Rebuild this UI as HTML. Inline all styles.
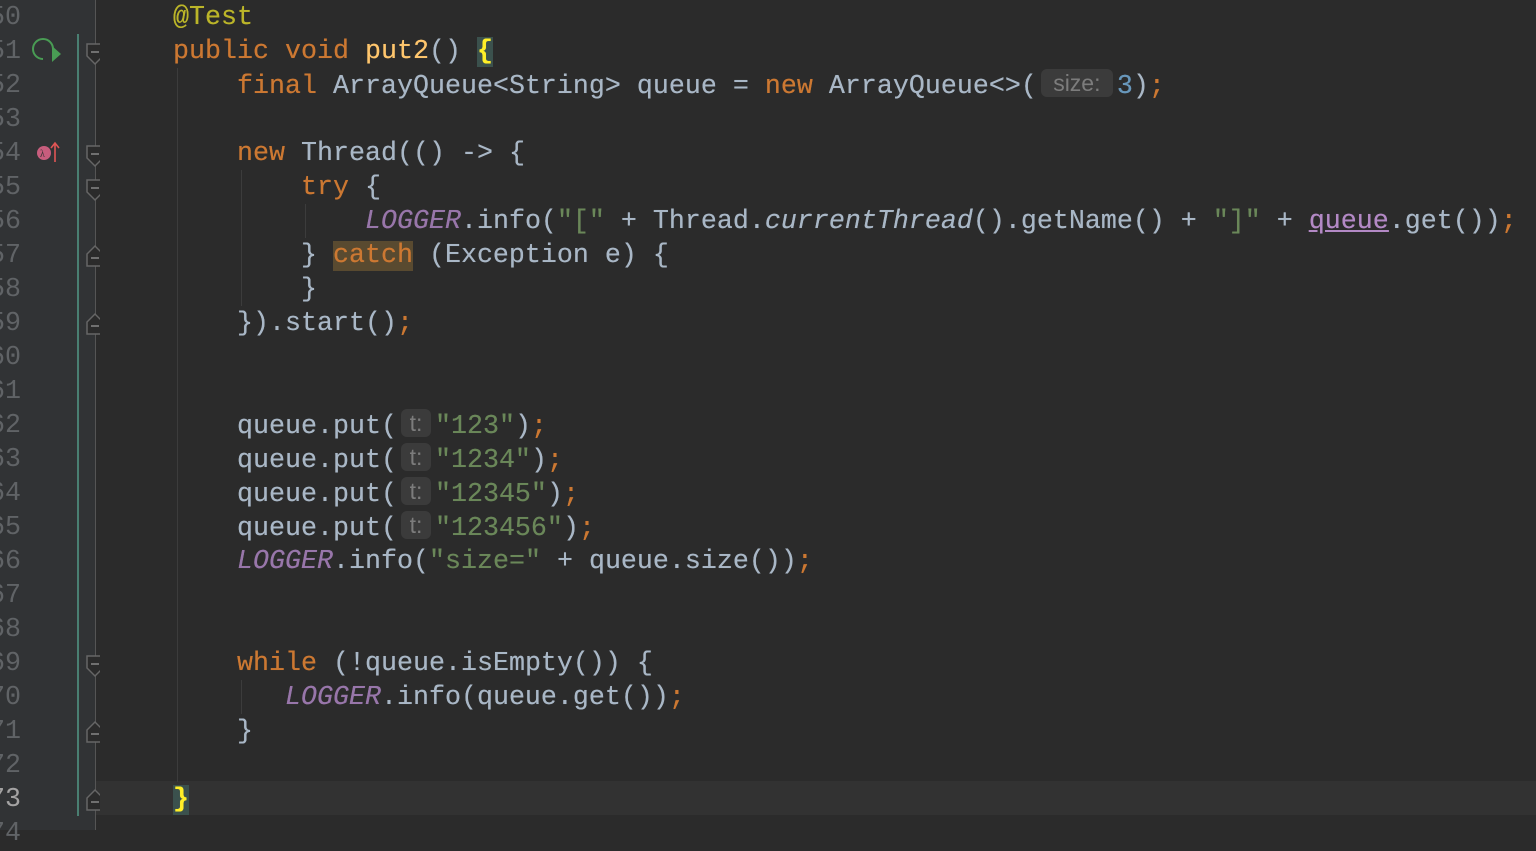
<!DOCTYPE html>
<html><head><meta charset="utf-8"><style>
body{margin:0;width:1536px;height:830px;overflow:hidden;background:#2b2b2b;position:relative;font-family:"Liberation Mono",monospace;}
.gut{position:absolute;left:0;top:0;width:96px;height:830px;background:#313335;}
.ln{position:absolute;right:1515px;width:60px;text-align:right;color:#606366;font-size:26.67px;line-height:34px;height:34px;margin-top:2px}
.l{position:absolute;left:173px;white-space:pre;font-size:26.67px;line-height:34px;height:34px;color:#a9b7c6;margin-top:2px;text-shadow:0 0 0.4px currentColor}
.k{color:#cc7832}.a{color:#bbb529}.s{color:#6a8759}.n{color:#6897bb}.p{color:#9876aa;font-style:italic}.m{color:#ffc66d}.i{font-style:italic}
.h{display:inline-block;font-family:"Liberation Sans",sans-serif;font-size:23px;color:#7c7c7c;background:#3b3b3b;border-radius:6px;line-height:28px;vertical-align:2px;text-align:center;text-shadow:none}
.g{position:absolute;width:1px;background:#3c3c3c}
</style></head><body>
<div class="gut"></div>
<div style="position:absolute;left:96px;top:781px;width:1440px;height:34px;background:#323232"></div>
<div style="position:absolute;left:77px;top:34px;width:2px;height:782px;background:#4a7f72"></div>
<div style="position:absolute;left:95px;top:0;width:1px;height:830px;background:#555"></div>
<div class="g" style="left:177px;top:68px;height:714px"></div>
<div class="g" style="left:241px;top:170px;height:136px"></div>
<div class="g" style="left:305px;top:204px;height:34px"></div>
<div class="g" style="left:241px;top:680px;height:34px"></div>
<svg style="position:absolute;left:0;top:0" width="100" height="830">
<g fill="#2b2b2b" stroke="#666" stroke-width="1.5">
<path d="M87 44h16v12l-8 8l-8-8z"/><path d="M87 146h16v12l-8 8l-8-8z"/><path d="M87 180h16v12l-8 8l-8-8z"/><path d="M87 656h16v12l-8 8l-8-8z"/>
<path d="M87 266h16v-12l-8-8l-8 8z"/><path d="M87 334h16v-12l-8-8l-8 8z"/><path d="M87 742h16v-12l-8-8l-8 8z"/><path d="M87 810h16v-12l-8-8l-8 8z"/>
</g>
<g stroke="#888" stroke-width="1.5"><path d="M91 52h8M91 154h8M91 188h8M91 664h8M91 258h8M91 326h8M91 734h8M91 802h8"/></g>
<path d="M53 49a10 10 0 1 0 -10 10" fill="none" stroke="#499c54" stroke-width="2"/><path d="M52 46l9 8l-9 8z" fill="#499c54"/>
<circle cx="44" cy="153" r="7" fill="#c75d7d"/><text x="40" y="157" font-size="10" fill="#333" font-family="Liberation Serif">λ</text><path d="M55 162v-18M51 148l4-5l4 5" stroke="#e05555" stroke-width="1.6" fill="none"/>
</svg>
<div class="ln" style="top:-1px">50</div><div class="ln" style="top:33px">51</div><div class="ln" style="top:67px">52</div><div class="ln" style="top:101px">53</div><div class="ln" style="top:135px">54</div><div class="ln" style="top:169px">55</div><div class="ln" style="top:203px">56</div><div class="ln" style="top:237px">57</div><div class="ln" style="top:271px">58</div><div class="ln" style="top:305px">59</div><div class="ln" style="top:339px">60</div><div class="ln" style="top:373px">61</div><div class="ln" style="top:407px">62</div><div class="ln" style="top:441px">63</div><div class="ln" style="top:475px">64</div><div class="ln" style="top:509px">65</div><div class="ln" style="top:543px">66</div><div class="ln" style="top:577px">67</div><div class="ln" style="top:611px">68</div><div class="ln" style="top:645px">69</div><div class="ln" style="top:679px">70</div><div class="ln" style="top:713px">71</div><div class="ln" style="top:747px">72</div><div class="ln" style="top:781px;color:#a4a3a3">73</div><div class="ln" style="top:815px">74</div>
<div class="l a" style="top:-1px">@Test</div>
<div class="l" style="top:33px"><span class="k">public void </span><span class="m">put2</span>() <span style="color:#ffef28;font-weight:bold;background:#3b514d">{</span></div>
<div class="l" style="top:67px">    <span class="k">final </span>ArrayQueue&lt;String&gt; queue = <span class="k">new </span>ArrayQueue&lt;&gt;(<span class="h" style="width:72px;margin:0 4px">size:</span><span class="n">3</span>)<span class="k">;</span></div>
<div class="l" style="top:135px">    <span class="k">new </span>Thread(() -&gt; {</div>
<div class="l" style="top:169px">        <span class="k">try </span>{</div>
<div class="l" style="top:203px">            <span class="p">LOGGER</span>.info(<span class="s">"["</span> + Thread.<span class="i">currentThread</span>().getName() + <span class="s">"]"</span> + <span style="color:#b389c5;text-decoration:underline">queue</span>.get())<span class="k">;</span></div>
<div class="l" style="top:237px">        } <span class="k" style="background:#594a30">catch</span> (Exception e) {</div>
<div class="l" style="top:271px">        }</div>
<div class="l" style="top:305px">    }).start()<span class="k">;</span></div>
<div class="l" style="top:407px">    queue.put(<span class="h" style="width:30px;margin:0 4px">t:</span><span class="s">"123"</span>)<span class="k">;</span></div>
<div class="l" style="top:441px">    queue.put(<span class="h" style="width:30px;margin:0 4px">t:</span><span class="s">"1234"</span>)<span class="k">;</span></div>
<div class="l" style="top:475px">    queue.put(<span class="h" style="width:30px;margin:0 4px">t:</span><span class="s">"12345"</span>)<span class="k">;</span></div>
<div class="l" style="top:509px">    queue.put(<span class="h" style="width:30px;margin:0 4px">t:</span><span class="s">"123456"</span>)<span class="k">;</span></div>
<div class="l" style="top:543px">    <span class="p">LOGGER</span>.info(<span class="s">"size="</span> + queue.size())<span class="k">;</span></div>
<div class="l" style="top:645px">    <span class="k">while </span>(!queue.isEmpty()) {</div>
<div class="l" style="top:679px">       <span class="p">LOGGER</span>.info(queue.get())<span class="k">;</span></div>
<div class="l" style="top:713px">    }</div>
<div class="l" style="top:781px"><span style="color:#ffef28;font-weight:bold;background:#3b514d">}</span></div>
</body></html>
